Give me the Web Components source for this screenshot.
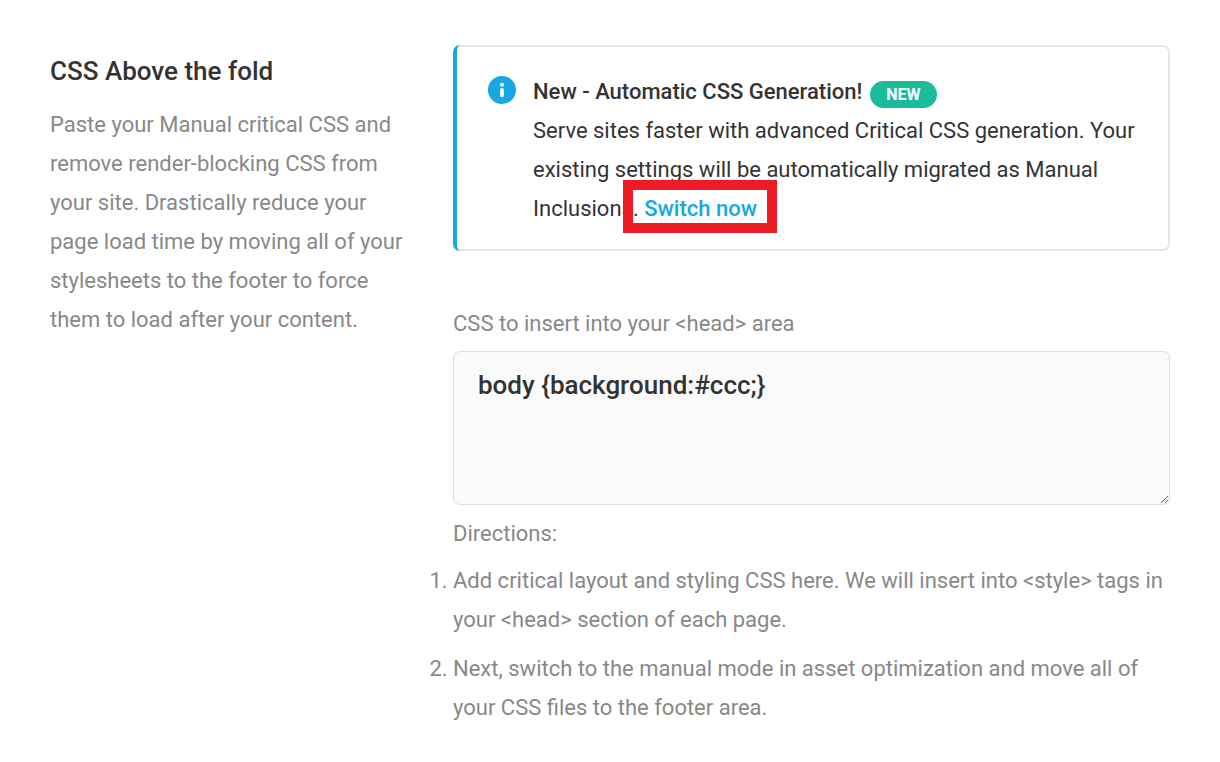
<!DOCTYPE html>
<html lang="en">
<head>
<meta charset="utf-8">
<meta name="viewport" content="width=device-width, initial-scale=1">
<title>CSS Above the fold</title>
<style>
  body {
    margin: 0;
    background: #fff;
    color: #888;
    font: 400 22px/39px Roboto, sans-serif;
  }
</style>
</head>
<body>

<settings-row>
  <span slot="title">CSS Above the fold</span>
  <span slot="description">Paste your Manual critical CSS and remove render-blocking CSS from your site. Drastically reduce your page load time by moving all of your stylesheets to the footer to force them to load after your content.</span>

  <info-notice>
    <span slot="title">New - Automatic CSS Generation!</span>
    <status-tag slot="title">New</status-tag>
    Serve sites faster with advanced Critical CSS generation. Your existing settings will be automatically migrated as Manual Inclusions. <marked-link href="#switch">Switch now</marked-link>
  </info-notice>

  <css-field label="CSS to insert into your &lt;head&gt; area" value="body {background:#ccc;}"></css-field>

  <directions-list></directions-list>
</settings-row>

<script>
class SettingsRow extends HTMLElement {
  constructor() {
    super();
    this.attachShadow({ mode: 'open' });
    this.shadowRoot.innerHTML = `
      <style>
        :host {
          display: grid;
          grid-template-columns: 353px minmax(0, 1fr);
          column-gap: 50px;
          padding: 45px 50px 34px;
        }
        h2 { margin: 7px 0 14px; color: #333; font-size: 26px; font-weight: 500; }
        p { margin: 0; }
      </style>
      <div>
        <h2><slot name="title"></slot></h2>
        <p><slot name="description"></slot></p>
      </div>
      <div><slot></slot></div>
    `;
  }
}

class InfoNotice extends HTMLElement {
  constructor() {
    super();
    this.attachShadow({ mode: 'open' });
    this.shadowRoot.innerHTML = `
      <style>
        :host {
          display: flex;
          gap: 17px;
          position: relative;
          box-sizing: border-box;
          padding: 25px 30px 21px 33px;
          border: 2px solid #e6e6e6;
          border-radius: 7px;
          color: #333;
        }
        /* accent drawn over the left border */
        :host::before {
          content: '';
          position: absolute;
          inset: -2px auto -2px -2px;
          width: 8px;
          box-sizing: border-box;
          border-left: 4px solid #17a8e3;
          border-radius: 7px 0 0 7px;
        }
        svg { flex: none; width: 28px; height: 28px; margin-top: 4px; }
        .title { display: flex; align-items: center; gap: 8px; font-weight: 500; }
      </style>
      <svg viewBox="0 0 28 28" aria-hidden="true">
        <circle cx="14" cy="14" r="14" fill="#17a8e3"/>
        <circle cx="14" cy="8.7" r="2" fill="#fff"/>
        <rect x="12.2" y="12" width="3.6" height="9.2" rx="1.8" fill="#fff"/>
      </svg>
      <div>
        <div class="title"><slot name="title"></slot></div>
        <div><slot></slot></div>
      </div>
    `;
  }
}

class StatusTag extends HTMLElement {
  constructor() {
    super();
    this.attachShadow({ mode: 'open' });
    this.shadowRoot.innerHTML = `
      <style>
        :host {
          display: inline-block;
          margin-top: 5px;
          padding: 0 16px;
          border-radius: 14px;
          background: #1abc9c;
          color: #fff;
          font-size: 16px;
          font-weight: 700;
          line-height: 27px;
          text-transform: uppercase;
        }
      </style>
      <slot></slot>
    `;
  }
}

// link with a red frame laid over the text around it
class MarkedLink extends HTMLElement {
  constructor() {
    super();
    this.attachShadow({ mode: 'open' });
    this.shadowRoot.innerHTML = `
      <style>
        :host { display: inline; }
        a { position: relative; color: #17a8e3; font-weight: 500; text-decoration: none; }
        a::after {
          content: '';
          position: absolute;
          inset: -16px -20px -12px -21px;
          border: 10px solid #ed1c24;
          pointer-events: none;
        }
      </style><a href="${this.getAttribute('href')}"><slot></slot></a>`;
  }
}

class CssField extends HTMLElement {
  constructor() {
    super();
    this.attachShadow({ mode: 'open' });
    this.shadowRoot.innerHTML = `
      <style>
        :host { display: block; margin-top: 53px; }
        label { display: block; margin-bottom: 8px; }
        textarea {
          display: block;
          box-sizing: border-box;
          width: 100%;
          height: 154px;
          padding: 14px 24px;
          border: 1px solid #ddd;
          border-radius: 7px;
          background: #fafafa;
          color: #333;
          font: 500 26px/39px Roboto, sans-serif;
          resize: vertical;
        }
      </style>
      <label for="css"></label>
      <textarea id="css" spellcheck="false"></textarea>
    `;
    this.shadowRoot.querySelector('label').textContent = this.getAttribute('label');
    this.shadowRoot.querySelector('textarea').value = this.getAttribute('value');
  }
}

class DirectionsList extends HTMLElement {
  constructor() {
    super();
    this.attachShadow({ mode: 'open' });
    this.shadowRoot.innerHTML = `
      <style>
        :host { display: block; margin-top: 9px; }
        p { margin: 0; }
        ol { margin: 8px 0 0; padding: 0; }
        li + li { margin-top: 10px; }
      </style>
      <p>Directions:</p>
      <ol>
        <li>Add critical layout and styling CSS here. We will insert into &lt;style&gt; tags in your &lt;head&gt; section of each page.</li>
        <li>Next, switch to the manual mode in asset optimization and move all of your CSS files to the footer area.</li>
      </ol>
    `;
  }
}

customElements.define('settings-row', SettingsRow);
customElements.define('info-notice', InfoNotice);
customElements.define('status-tag', StatusTag);
customElements.define('marked-link', MarkedLink);
customElements.define('css-field', CssField);
customElements.define('directions-list', DirectionsList);
</script>
</body>
</html>
